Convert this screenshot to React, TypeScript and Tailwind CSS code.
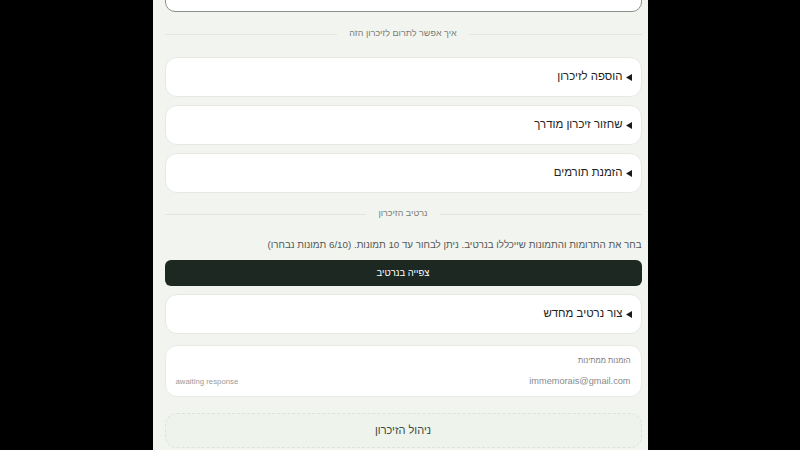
import React from "react";

const font = { fontFamily: '"Liberation Sans", Arial, "Noto Sans", sans-serif' };

function Marker() {
  return (
    <svg width="6" height="7" viewBox="0 0 6 7" className="shrink-0">
      <path d="M6 0 L6 7 L0 3.5 Z" fill="#1a1a1a" />
    </svg>
  );
}

function Divider({ label }: { label: string }) {
  return (
    <div className="flex items-center gap-2 h-[22px]">
      <div className="flex-1 h-px bg-[#e2e6df]" />
      <span className="text-[9px] text-[#7a7d78] px-1">{label}</span>
      <div className="flex-1 h-px bg-[#e2e6df]" />
    </div>
  );
}

function Collapsible({ label }: { label: string }) {
  return (
    <div className="h-[40px] bg-white border border-[#e6e9e3] rounded-[12px] flex items-center pr-[9px] pl-4 gap-[3px]">
      <Marker />
      <span className="text-[11.4px] text-[#222222]">{label}</span>
    </div>
  );
}

export default function App() {
  return (
    <div className="w-[800px] h-[450px] bg-black flex justify-center overflow-hidden" style={font}>
      <div dir="rtl" className="w-[495px] h-full bg-[#f1f4ef] pl-[12px] pr-[6px] flex flex-col">
        <div className="h-[52px] -mt-[40px] bg-white border border-[#8e8f8c] rounded-[10px] shrink-0" />

        <div className="mt-[11px]">
          <Divider label="איך אפשר לתרום לזיכרון הזה" />
        </div>

        <div className="mt-[12px] flex flex-col gap-[8px]">
          <Collapsible label="הוספה לזיכרון" />
          <Collapsible label="שחזור זיכרון מודרך" />
          <Collapsible label="הזמנת תורמים" />
        </div>

        <div className="mt-[10px]">
          <Divider label="נרטיב הזיכרון" />
        </div>

        <p className="mt-[13px] text-[9.75px] leading-[14px] text-[#555855]">
          בחר את התרומות והתמונות שייכללו בנרטיב. ניתן לבחור עד 10 תמונות. (6/10 תמונות נבחרו)
        </p>

        <button className="mt-[8px] h-[26px] rounded-[6px] bg-[#1e2822] text-white text-[9.5px] flex items-center justify-center">
          צפייה בנרטיב
        </button>

        <div className="mt-[8px]">
          <Collapsible label="צור נרטיב מחדש" />
        </div>

        <div className="mt-[11px] h-[52px] bg-white border border-[#e8ebe5] rounded-[12px] px-[10px] pt-[10px] flex flex-col">
          <span className="text-[7.6px] leading-[10px] text-[#7a7a7a]">הזמנות ממתינות</span>
          <div className="mt-[9px] flex items-center justify-between">
            <span className="text-[9.2px] text-[#8a8a8a]">immemorais@gmail.com</span>
            <span className="text-[7.8px] text-[#9a9a9a]">awaiting response</span>
          </div>
        </div>

        <div className="mt-[16px] h-[35px] bg-[#eef3ec] border border-dashed border-[#dde4da] rounded-[12px] flex items-center justify-center">
          <span className="text-[11px] text-[#3d4a3f]">ניהול הזיכרון</span>
        </div>
      </div>
    </div>
  );
}
